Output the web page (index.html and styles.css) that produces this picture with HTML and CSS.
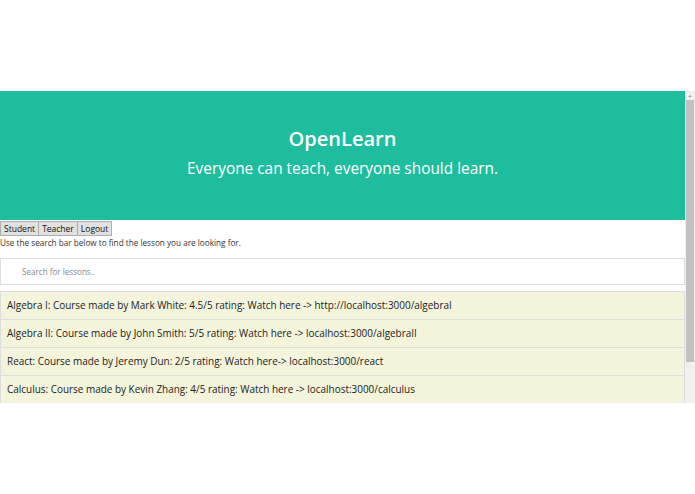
FILE: index.html
```html
<!DOCTYPE html>
<html>
<head>
<meta charset="utf-8">
<link rel="stylesheet" href="styles.css">
</head>
<body>
<div class="top-space"></div>
<div class="frame">
  <div class="viewport">
    <header class="hero">
      <h1 class="hero-title">OpenLearn</h1>
      <p class="hero-sub">Everyone can teach, everyone should learn.</p>
    </header>
    <nav class="nav">
      <button class="nav-btn">Student</button><button class="nav-btn">Teacher</button><button class="nav-btn">Logout</button>
    </nav>
    <p class="hint">Use the search bar below to find the lesson you are looking for.</p>
    <input class="search" type="text" placeholder="Search for lessons..">
    <ul class="lessons">
      <li class="lesson">Algebra I: Course made by Mark White: 4.5/5 rating: Watch here -&gt; http://localhost:3000/algebraI</li>
      <li class="lesson">Algebra II: Course made by John Smith: 5/5 rating: Watch here -&gt; localhost:3000/algebraII</li>
      <li class="lesson">React: Course made by Jeremy Dun: 2/5 rating: Watch here-&gt; localhost:3000/react</li>
      <li class="lesson">Calculus: Course made by Kevin Zhang: 4/5 rating: Watch here -&gt; localhost:3000/calculus</li>
    </ul>
  </div>
  <div class="scrollbar">
    <div class="scroll-arrow"></div>
    <div class="scroll-thumb"></div>
  </div>
</div>
</body>
</html>
```
FILE: styles.css
```css
html, body {
  margin: 0;
  padding: 0;
  background: #ffffff;
  font-family: "Open Sans", "Noto Sans", sans-serif;
}

.top-space {
  height: 91px;
}

.frame {
  display: flex;
  height: 312px;
}

.viewport {
  flex: 1;
  overflow: hidden;
}

.hero {
  background: #1dbd9d;
  color: #ffffff;
  height: 129px;
  display: flex;
  flex-direction: column;
  align-items: center;
  justify-content: center;
  padding-bottom: 3px;
  box-sizing: border-box;
}

.hero-title {
  margin: 0;
  font-size: 20px;
  font-weight: 600;
  line-height: 28px;
}

.hero-sub {
  margin: 2px 0 0 0;
  font-size: 15.4px;
  font-weight: 400;
  line-height: 28px;
}

.nav {
  display: flex;
  margin-top: 1px;
}

.nav-btn {
  font-family: inherit;
  font-size: 8.5px;
  color: #111;
  background: #e1e1e1;
  border: 1px solid #adadad;
  border-radius: 0;
  padding: 0 3px;
  height: 15px;
  line-height: 13px;
  margin: 0 -1px 0 0;
}

.hint {
  margin: 1px 0 0 0;
  font-size: 8.2px;
  line-height: 12px;
  color: #333;
}

.search {
  display: block;
  width: 100%;
  margin: 9px 0 0 0;
  height: 27px;
  box-sizing: border-box;
  border: 1px solid #dddddd;
  padding: 0 0 0 21px;
  font-family: inherit;
  font-size: 8.1px;
  color: #555;
  outline: none;
}

.search::placeholder {
  color: #8a8a8a;
}

.lessons {
  list-style: none;
  margin: 6px 0 0 0;
  padding: 0;
}

.lesson {
  background: #f4f4dc;
  border: 1px solid #dddddd;
  margin-top: -1px;
  height: 29px;
  box-sizing: border-box;
  padding: 0 0 0 6px;
  font-size: 9.95px;
  line-height: 27px;
  color: #222;
}

.lesson:first-child {
  margin-top: 0;
}

.scrollbar {
  width: 10px;
  background: #f0f0f0;
  display: flex;
  flex-direction: column;
  align-items: center;
}

.scroll-arrow {
  width: 0;
  height: 0;
  margin-top: 4px;
  border-left: 2px solid transparent;
  border-right: 2px solid transparent;
  border-bottom: 2px solid #a3a3a3;
}

.scroll-thumb {
  margin-top: 3px;
  width: 8px;
  height: 262px;
  background: #c1c1c1;
}
```
